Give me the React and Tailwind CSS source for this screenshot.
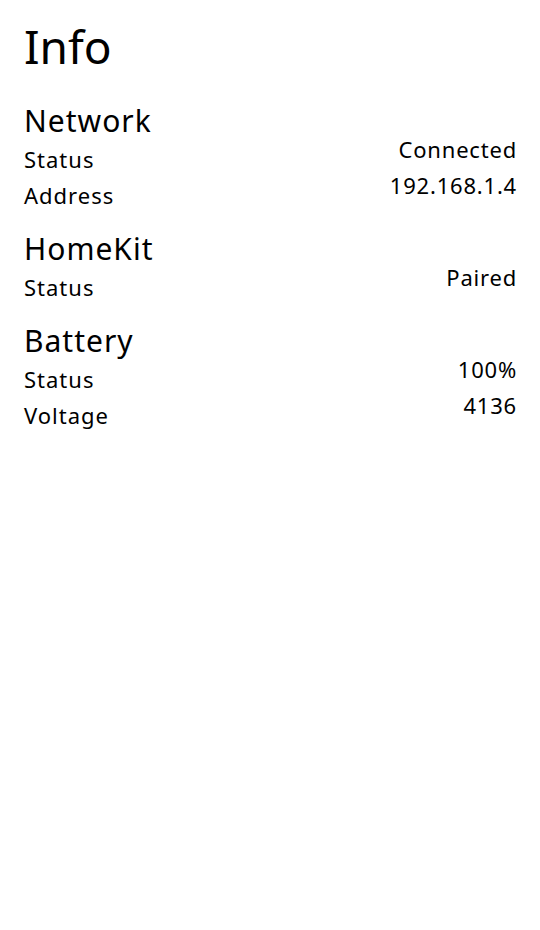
const sections = [
  {
    title: "Network",
    rows: [
      ["Status", "Connected"],
      ["Address", "192.168.1.4"],
    ],
  },
  {
    title: "HomeKit",
    rows: [["Status", "Paired"]],
  },
  {
    title: "Battery",
    rows: [
      ["Status", "100%"],
      ["Voltage", "4136"],
    ],
  },
];

export default function App() {
  return (
    <div
      className="min-h-screen bg-white text-black px-6 pt-[18px]"
      style={{ fontFamily: '"Noto Sans", "Open Sans", sans-serif' }}
    >
      <h1 className="text-[46px] leading-[56px] mb-[27px]">Info</h1>
      <div className="flex flex-col gap-4">
        {sections.map((s) => (
          <div key={s.title} className="flex justify-between items-end">
            <div>
              <h2 className="text-[30px] leading-[40px] tracking-[1px]">{s.title}</h2>
              {s.rows.map(([label]) => (
                <p key={label} className="text-[22px] leading-[36px] tracking-[1px]">
                  {label}
                </p>
              ))}
            </div>
            <div className="text-right mb-[10px]">
              {s.rows.map(([label, value]) => (
                <p key={label} className="text-[22px] leading-[36px] tracking-[0.8px] -mr-[1px]">
                  {value}
                </p>
              ))}
            </div>
          </div>
        ))}
      </div>
    </div>
  );
}
